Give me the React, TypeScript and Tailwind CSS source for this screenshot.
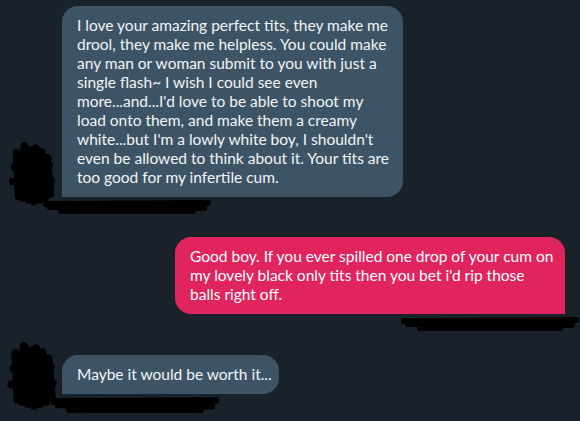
import React from "react";

// black marker scribbles that hide avatars and timestamps
function AvatarScribble({ className }: { className?: string }) {
  return (
    <svg viewBox="0 0 50 70" className={className}>
      <path
        d="M12 60 L10 15 L16 62 L18 8 L22 64 L24 12 L28 66 L30 10 L34 64 L36 14 L40 62 L42 20 L45 58 M8 30 L44 28 M6 45 L46 44"
        fill="none"
        stroke="#000"
        strokeWidth="8"
        strokeLinecap="round"
        strokeLinejoin="round"
      />
    </svg>
  );
}

function LineScribble({ className }: { className?: string }) {
  return (
    <svg viewBox="0 0 180 16" preserveAspectRatio="none" className={className}>
      <path
        d="M4 5 L176 4 M8 8 L172 9 M20 12 L160 12"
        fill="none"
        stroke="#000"
        strokeWidth="6"
        strokeLinecap="round"
      />
    </svg>
  );
}

const font = { fontFamily: "Lato, 'Open Sans', sans-serif" };

export default function App() {
  return (
    <div
      className="w-[580px] h-[421px] overflow-hidden bg-[#19212b] text-[15.5px] leading-[19px] text-[#f2f4f5]"
      style={font}
    >
      <div className="flex items-end pt-[6px]">
        <div className="w-[62px] flex justify-center">
          <AvatarScribble className="w-[48px] h-[70px] -mb-[10px]" />
        </div>
        <div className="w-[341px] whitespace-nowrap rounded-[16px] rounded-bl-none bg-[#3d5466] px-[15px] py-[10px]">
          I love your amazing perfect tits, they make me
          <br />
          drool, they make me helpless. You could make
          <br />
          any man or woman submit to you with just a
          <br />
          single flash~ I wish I could see even
          <br />
          more...and...I'd love to be able to shoot my
          <br />
          load onto them, and make them a creamy
          <br />
          white...but I'm a lowly white boy, I shouldn't
          <br />
          even be allowed to think about it. Your tits are
          <br />
          too good for my infertile cum.
        </div>
      </div>
      <div className="pl-[42px] pt-[2px]">
        <LineScribble className="w-[170px] h-[16px]" />
      </div>

      <div className="flex justify-end pr-[15px] pt-[22px]">
        <div className="w-[390px] whitespace-nowrap rounded-[16px] rounded-br-none bg-[#e0245e] px-[15px] py-[10px] text-white">
          Good boy. If you ever spilled one drop of your cum on
          <br />
          my lovely black only tits then you bet i'd rip those
          <br />
          balls right off.
        </div>
      </div>
      <div className="flex justify-end pt-[2px]">
        <LineScribble className="w-[180px] h-[16px]" />
      </div>

      <div className="flex items-end pt-[6px]">
        <div className="w-[62px] flex justify-center">
          <AvatarScribble className="w-[54px] h-[72px] -mb-[16px]" />
        </div>
        <div className="w-[217px] whitespace-nowrap rounded-[16px] rounded-bl-none bg-[#3d5466] px-[15px] py-[10px]">
          Maybe it would be worth it...
        </div>
      </div>
      <div className="pl-[50px] pt-[2px]">
        <LineScribble className="w-[170px] h-[18px]" />
      </div>
    </div>
  );
}
